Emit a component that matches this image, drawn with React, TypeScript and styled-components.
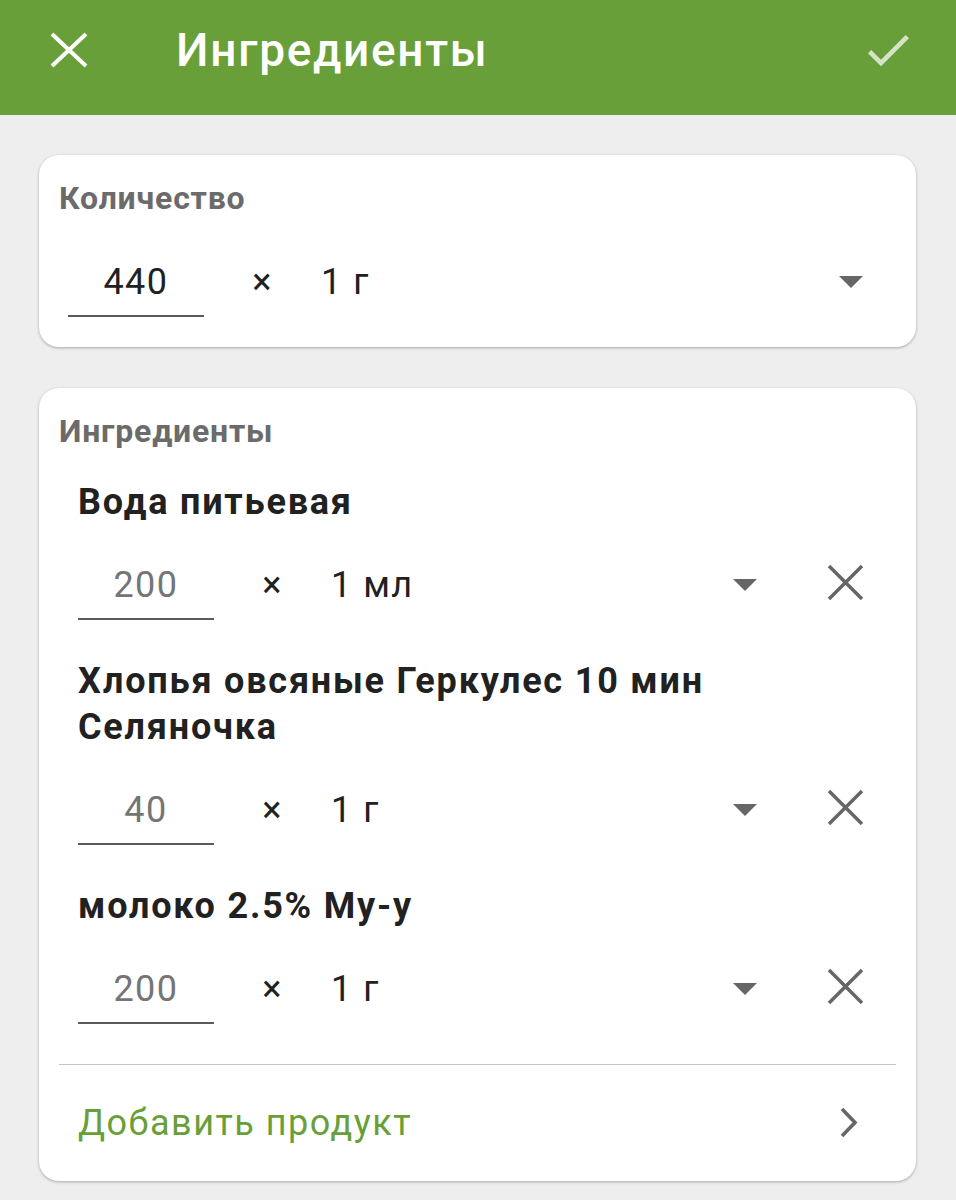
import styled, { createGlobalStyle } from "styled-components";

const GlobalStyle = createGlobalStyle`
  body {
    margin: 0;
    background: #eeeeee;
    font-family: Roboto, "Noto Sans", "Liberation Sans", sans-serif;
  }
`;

type Ingredient = {
  name: string;
  amount: string;
  unit: string;
};

const ingredients: Ingredient[] = [
  { name: "Вода питьевая", amount: "200", unit: "1 мл" },
  { name: "Хлопья овсяные Геркулес 10 мин Селяночка", amount: "40", unit: "1 г" },
  { name: "молоко 2.5% Му-у", amount: "200", unit: "1 г" },
];

export default function App() {
  return (
    <>
      <GlobalStyle />
      <Header>
        <IconButton aria-label="Закрыть">
          <svg width="58" height="58" viewBox="0 0 58 58">
            <path d="M12 13 L46 45 M46 13 L12 45" stroke="#fff" strokeWidth="4" fill="none" />
          </svg>
        </IconButton>
        <Title>Ингредиенты</Title>
        <IconButton aria-label="Готово" $dim>
          <svg width="56" height="56" viewBox="0 0 24 24">
            <path fill="#fff" d="M9 16.17L4.83 12l-1.42 1.41L9 19 21 7l-1.41-1.41z" />
          </svg>
        </IconButton>
      </Header>

      <Content>
        <Card $padding="23px 20px 30px">
          <Label>Количество</Label>
          <Row $indent={9} $right={33} $top={42}>
            <Field $muted={false}>440</Field>
            <Times>×</Times>
            <UnitSelect>
              <span>1 г</span>
              <DropArrow />
            </UnitSelect>
          </Row>
        </Card>

        <Card $padding="23px 20px 0">
          <Label>Ингредиенты</Label>
          <IngredientList>
            {ingredients.map((item) => (
              <IngredientItem key={item.name}>
                <Name>{item.name}</Name>
                <Row $indent={0} $right={26} $top={38}>
                  <Field $muted>{item.amount}</Field>
                  <Times>×</Times>
                  <UnitSelect>
                    <span>{item.unit}</span>
                    <DropArrow />
                  </UnitSelect>
                  <DeleteButton aria-label="Удалить">
                    <svg width="48" height="48" viewBox="0 0 48 48">
                      <path d="M7 7 L40 40 M40 7 L7 40" stroke="#666" strokeWidth="3.5" fill="none" />
                    </svg>
                  </DeleteButton>
                </Row>
              </IngredientItem>
            ))}
          </IngredientList>
          <Divider />
          <AddRow>
            <AddText>Добавить продукт</AddText>
            <svg width="20" height="32" viewBox="0 0 20 32">
              <polyline points="3,2 16,15.5 3,29" stroke="#666" strokeWidth="3.6" fill="none" />
            </svg>
          </AddRow>
        </Card>
      </Content>
    </>
  );
}

function DropArrow() {
  return (
    <svg width="24" height="12" viewBox="0 0 24 12">
      <polygon points="0,0 24,0 12,12" fill="#666" />
    </svg>
  );
}

const Header = styled("header")`
  height: 115px;
  box-sizing: border-box;
  padding: 0 40px 16px 40px;
  background: #689f38;
  display: flex;
  align-items: center;
`;

const IconButton = styled("button")<{ $dim?: boolean }>`
  background: transparent;
  border: none;
  padding: 0;
  margin: 0;
  display: flex;
  opacity: ${({ $dim }) => ($dim ? 0.72 : 1)};
`;

const Title = styled("h1")`
  flex: 1;
  margin: 0 0 0 78px;
  font-size: 46px;
  line-height: 54px;
  font-weight: 500;
  letter-spacing: 1.7px;
  color: #fff;
`;

const Content = styled("main")`
  display: flex;
  flex-direction: column;
  gap: 41px;
  padding: 40px 40px 20px 39px;
`;

const Card = styled("section")<{ $padding: string }>`
  background: #fff;
  border-radius: 20px;
  box-shadow: 0 1px 3px rgba(0, 0, 0, 0.3);
  padding: ${({ $padding }) => $padding};
`;

const Label = styled("div")`
  font-size: 32px;
  line-height: 40px;
  font-weight: 700;
  letter-spacing: 0.8px;
  color: #6b6b6b;
`;

const IngredientList = styled("div")`
  display: flex;
  flex-direction: column;
  gap: 38px;
  margin-top: 28px;
  padding-left: 19px;
`;

const IngredientItem = styled("div")`
  display: flex;
  flex-direction: column;
`;

const Name = styled("div")`
  font-size: 36px;
  line-height: 46px;
  font-weight: 700;
  letter-spacing: 1.8px;
  color: #212121;
  padding-right: 40px;
`;

const Row = styled("div")<{ $indent: number; $right: number; $top: number }>`
  display: flex;
  align-items: baseline;
  margin-top: ${({ $top }) => $top}px;
  padding-left: ${({ $indent }) => $indent}px;
  padding-right: ${({ $right }) => $right}px;
  font-size: 36px;
  line-height: 44px;
  letter-spacing: 1.5px;
  color: #212121;
`;

const Field = styled("div")<{ $muted: boolean }>`
  width: 136px;
  flex-shrink: 0;
  text-align: center;
  padding-bottom: 11px;
  border-bottom: 2px solid #5a5a5a;
  color: ${({ $muted }) => ($muted ? "#757575" : "#212121")};
`;

const Times = styled("span")`
  width: 117px;
  flex-shrink: 0;
  text-align: center;
`;

const UnitSelect = styled("div")`
  flex: 1;
  display: flex;
  align-items: center;
  justify-content: space-between;
`;

const DeleteButton = styled("button")`
  background: transparent;
  border: none;
  padding: 0;
  margin: -4px 0 0 65px;
  display: flex;
  align-self: flex-start;
`;

const Divider = styled("hr")`
  margin: 40px 0 0;
  border: none;
  border-top: 1px solid #c4c4c4;
`;

const AddRow = styled("div")`
  height: 116px;
  display: flex;
  align-items: center;
  justify-content: space-between;
  padding: 0 37px 0 19px;
`;

const AddText = styled("span")`
  font-size: 36px;
  letter-spacing: 1.5px;
  color: #689f38;
`;
